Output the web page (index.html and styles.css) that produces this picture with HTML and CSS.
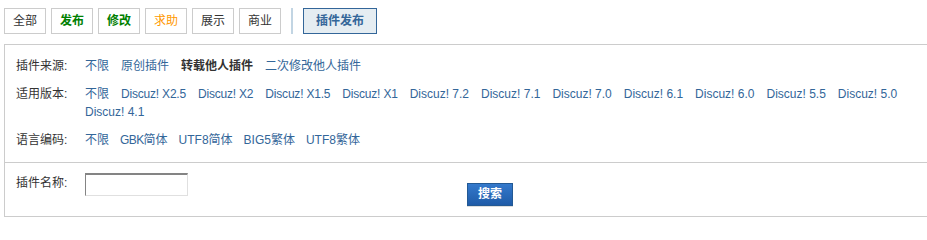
FILE: index.html
```html
<!DOCTYPE html>
<html lang="zh-CN">
<head>
<meta charset="utf-8">
<title>插件</title>
<link rel="stylesheet" href="styles.css">
</head>
<body>
<div class="page">
  <div class="tabs">
    <a class="tab">全部</a>
    <a class="tab tab-green">发布</a>
    <a class="tab tab-green">修改</a>
    <a class="tab tab-orange">求助</a>
    <a class="tab">展示</a>
    <a class="tab">商业</a>
    <span class="sep"></span>
    <a class="tab tab-active">插件发布</a>
  </div>
  <div class="box">
    <div class="filters">
      <div class="row">
        <span class="label">插件来源:</span>
        <div class="values">
          <a class="link">不限</a>
          <a class="link">原创插件</a>
          <a class="link current">转载他人插件</a>
          <a class="link">二次修改他人插件</a>
        </div>
      </div>
      <div class="row">
        <span class="label">适用版本:</span>
        <div class="values">
          <a class="link">不限</a>
          <a class="link narrow">Discuz! X2.5</a>
          <a class="link narrow">Discuz! X2</a>
          <a class="link narrow">Discuz! X1.5</a>
          <a class="link narrow">Discuz! X1</a>
          <a class="link">Discuz! 7.2</a>
          <a class="link">Discuz! 7.1</a>
          <a class="link">Discuz! 7.0</a>
          <a class="link">Discuz! 6.1</a>
          <a class="link">Discuz! 6.0</a>
          <a class="link">Discuz! 5.5</a>
          <a class="link">Discuz! 5.0</a>
          <a class="link">Discuz! 4.1</a>
        </div>
      </div>
      <div class="row">
        <span class="label">语言编码:</span>
        <div class="values values-tight">
          <a class="link">不限</a>
          <a class="link"><span class="gbk">GBK</span>简体</a>
          <a class="link">UTF8简体</a>
          <a class="link">BIG5繁体</a>
          <a class="link">UTF8繁体</a>
        </div>
      </div>
    </div>
    <div class="search">
      <span class="label search-label">插件名称:</span>
      <input class="input" type="text">
      <button class="btn" type="button">搜索</button>
    </div>
  </div>
</div>
</body>
</html>
```

FILE: styles.css
```css
html, body {
  margin: 0;
  padding: 0;
  background: #fff;
  overflow: hidden;
}
body {
  font: 12px/18px "Liberation Sans", "Noto Sans CJK SC", sans-serif;
  color: #333;
}
.page {
  padding: 8px 0 0 4px;
  width: 940px;
}
.tabs {
  display: flex;
  align-items: center;
  gap: 5px;
  height: 26px;
}
.tab {
  display: block;
  box-sizing: border-box;
  height: 26px;
  line-height: 24px;
  padding: 0 8px;
  min-width: 42px;
  text-align: center;
  border: 1px solid #ccc;
  color: #333;
  background: #fff;
}
.tab-green {
  color: #008000;
  font-weight: bold;
}
.tab-orange {
  color: #f90;
}
.sep {
  display: block;
  width: 2px;
  height: 26px;
  background: #c2d5e3;
  margin: 0 5px;
}
.tab-active {
  width: 74px;
  padding: 0;
  color: #336699;
  font-weight: bold;
  background: #e5edf2;
  border-color: #336699;
}
.box {
  margin-top: 10px;
  border: 1px solid #ccc;
}
.filters {
  padding: 12px 0 13px 11px;
  display: flex;
  flex-direction: column;
  gap: 10px;
  border-bottom: 1px solid #ccc;
}
.row {
  display: flex;
}
.label {
  flex: none;
  width: 69px;
  color: #333;
}
.values {
  width: 840px;
  display: flex;
  flex-wrap: wrap;
  column-gap: 12px;
}
.values-tight {
  column-gap: 11px;
}
.link {
  color: #336699;
  white-space: nowrap;
}
.narrow {
  letter-spacing: -0.2px;
}
.gbk {
  letter-spacing: -0.6px;
}
.current {
  color: #333;
  font-weight: bold;
}
.search {
  display: flex;
  align-items: flex-start;
  padding: 10px 0 10px 11px;
}
.search-label {
  margin-top: 1px;
}
.input {
  box-sizing: border-box;
  width: 103px;
  height: 23px;
  margin: 0;
  padding: 0 3px;
  border: 1px solid;
  border-color: #848484 #e0e0e0 #e0e0e0 #848484;
  border-top-width: 2px;
  background: #fff;
  font: inherit;
}
.btn {
  box-sizing: border-box;
  width: 46px;
  height: 23px;
  margin: 10px 0 0 279px;
  padding: 0;
  border: 1px solid #235994;
  background: linear-gradient(#3479cc, #1f5ba8);
  color: #fff;
  font: bold 12px/21px "Liberation Sans", "Noto Sans CJK SC", sans-serif;
  box-shadow: 0 1px 0 #ddd;
}
```
